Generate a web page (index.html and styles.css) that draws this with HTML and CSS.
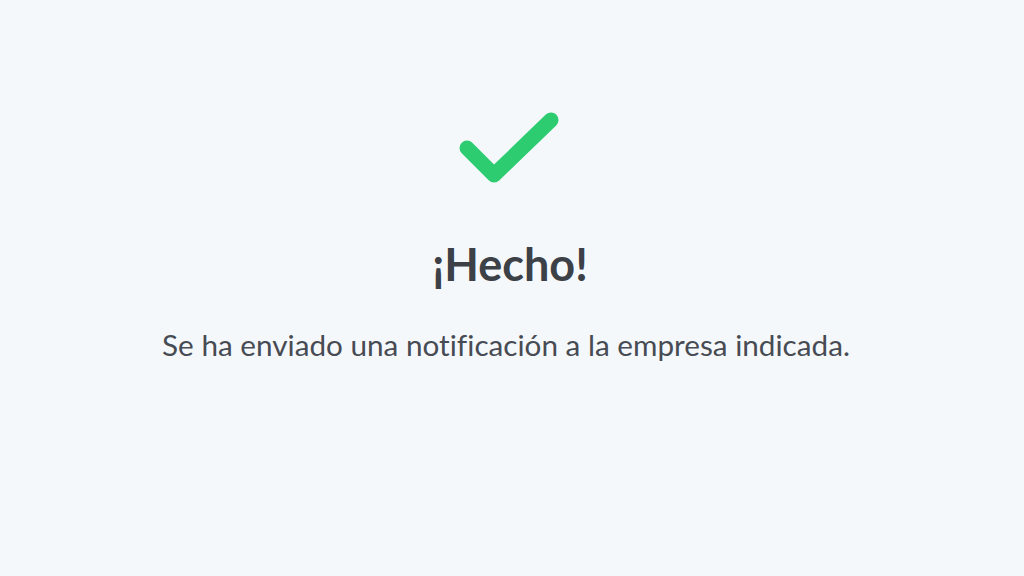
FILE: index.html
```html
<!DOCTYPE html>
<html lang="es">
<head>
<meta charset="utf-8">
<title>¡Hecho!</title>
<link rel="stylesheet" href="styles.css">
</head>
<body>
<main class="done">
  <svg class="done__icon" width="112" height="84" viewBox="0 0 112 84" aria-hidden="true">
    <polyline points="11,38 38,65 95,10" fill="none" stroke="#2ecc71" stroke-width="15" stroke-linecap="round" stroke-linejoin="round"/>
  </svg>
  <h1 class="done__title">¡Hecho!</h1>
  <p class="done__text">Se ha enviado una notificación a la empresa indicada.</p>
</main>
</body>
</html>
```

FILE: styles.css
```css
html, body {
  margin: 0;
  padding: 0;
}
body {
  width: 1024px;
  height: 576px;
  background: #f5f8fb;
  font-family: Lato, "Open Sans", sans-serif;
  font-variant-ligatures: none;
  overflow: hidden;
}
.done {
  display: flex;
  flex-direction: column;
  align-items: center;
  padding-top: 110px;
}
.done__icon {
  display: block;
}
.done__title {
  margin: 44px 0 0 -4px;
  font-size: 45px;
  line-height: 53px;
  font-weight: 700;
  color: #3c4047;
}
.done__text {
  margin: 36px 12px 0 0;
  font-size: 29.7px;
  line-height: 36px;
  color: #474b53;
}
```
